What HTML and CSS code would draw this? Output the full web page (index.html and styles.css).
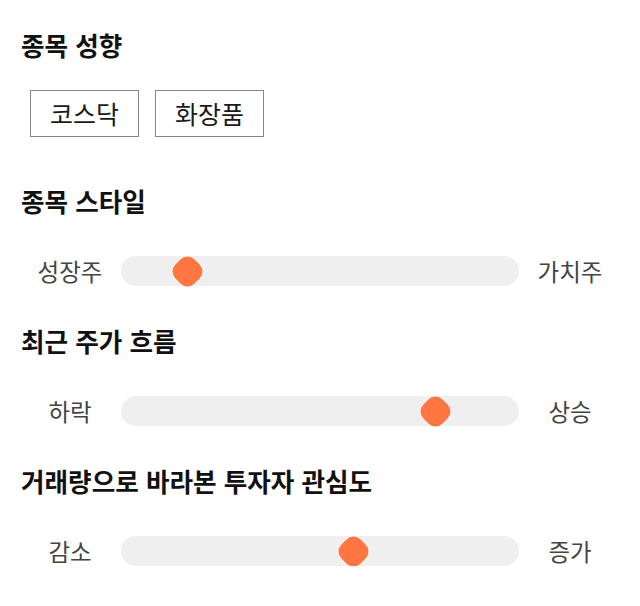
FILE: index.html
```html
<!DOCTYPE html>
<html lang="ko">
<head>
    <meta charset="UTF-8">
    <meta name="viewport" content="width=device-width, initial-scale=1.0">
    <title>종목 성향</title>
    <link rel="stylesheet" href="styles.css">
</head>
<body>
    <div class="panel">
        <div class="section">
            <h2 class="section-title">종목 성향</h2>
            <div class="tag-list">
                <span class="tag">코스닥</span>
                <span class="tag">화장품</span>
            </div>
        </div>

        <div class="section">
            <h2 class="section-title">종목 스타일</h2>
            <div class="scale">
                <span class="scale-label">성장주</span>
                <div class="scale-track">
                    <span class="scale-thumb" style="left: 16.6%"></span>
                </div>
                <span class="scale-label">가치주</span>
            </div>
        </div>

        <div class="section">
            <h2 class="section-title">최근 주가 흐름</h2>
            <div class="scale">
                <span class="scale-label">하락</span>
                <div class="scale-track">
                    <span class="scale-thumb" style="left: 79.1%"></span>
                </div>
                <span class="scale-label">상승</span>
            </div>
        </div>

        <div class="section">
            <h2 class="section-title">거래량으로 바라본 투자자 관심도</h2>
            <div class="scale">
                <span class="scale-label">감소</span>
                <div class="scale-track">
                    <span class="scale-thumb" style="left: 58.4%"></span>
                </div>
                <span class="scale-label">증가</span>
            </div>
        </div>
    </div>
</body>
</html>
```

FILE: styles.css
```css
body {
    margin: 0;
    background: #fff;
    font-family: "Noto Sans CJK KR", "Noto Sans", sans-serif;
    color: #111;
}
.panel {
    padding: 29px 21px 0;
}
.section + .section {
    margin-top: 39px;
}
.section-title {
    margin: 0;
    font-size: 25.6px;
    font-weight: bold;
    line-height: 32px;
    color: #111;
}
.tag-list {
    display: flex;
    gap: 16px;
    margin: 29px 0 48px 9px;
}
.tag {
    border: 1px solid #888;
    padding: 8px 19px;
    font-size: 25px;
    line-height: 29px;
    color: #1a1a1a;
}
.scale {
    display: flex;
    align-items: center;
    gap: 11px;
    margin: 39px 9px 0;
}
.scale-label {
    width: 80px;
    text-align: center;
    font-size: 23.5px;
    line-height: 30px;
    color: #444;
}
.scale-track {
    position: relative;
    flex: 1;
    height: 30px;
    border-radius: 15px;
    background: #efefef;
}
.scale-thumb {
    position: absolute;
    top: 1.5px;
    width: 27px;
    height: 27px;
    margin-left: -13.5px;
    border-radius: 10px;
    background: #ff7640;
    transform: rotate(45deg);
}
```
